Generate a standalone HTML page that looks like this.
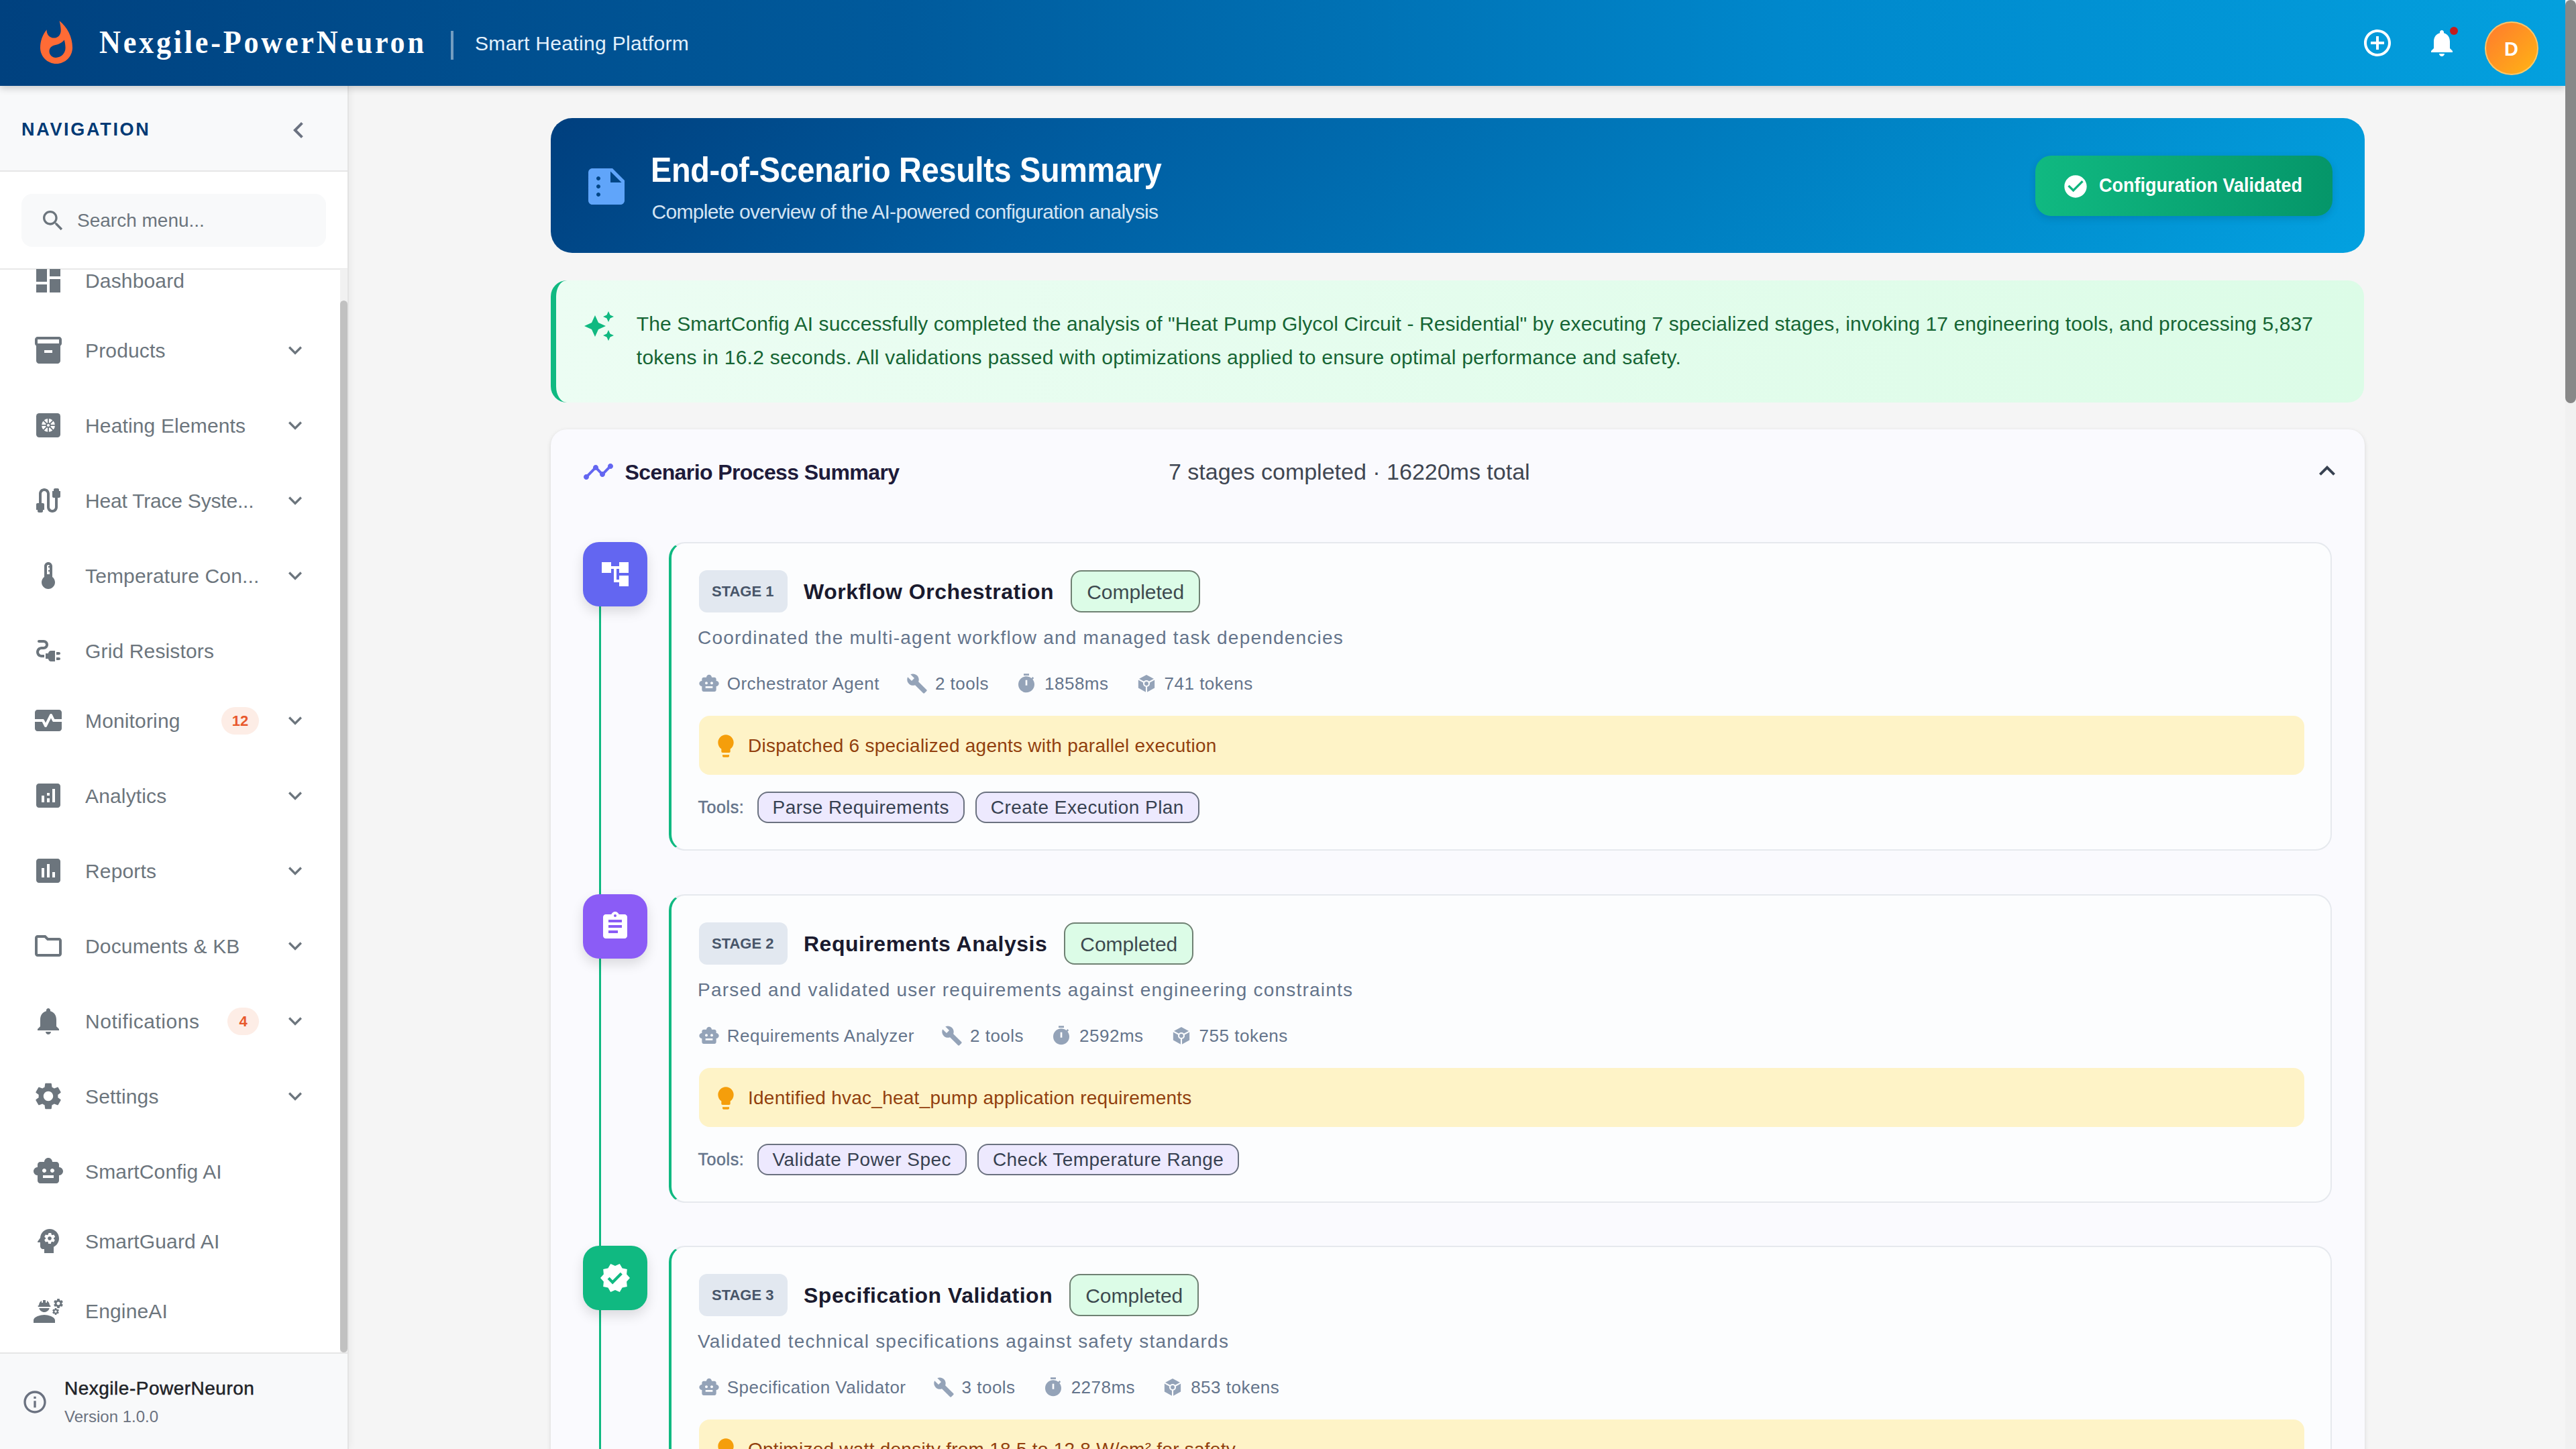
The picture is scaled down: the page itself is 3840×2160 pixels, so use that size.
<!DOCTYPE html>
<html><head><meta charset="utf-8">
<style>
*{box-sizing:border-box}
html,body{margin:0;padding:0}
body{width:3840px;height:2160px;overflow:hidden;position:relative;background:#f5f5f5;font-family:"Liberation Sans",sans-serif}
.a{position:absolute}
.t{position:absolute;line-height:1;white-space:nowrap}
svg{display:block}
/* header */
#hdr{left:0;top:0;width:3824px;height:128px;background:linear-gradient(90deg,#00417f 0%,#005a9c 35%,#0088cc 70%,#03a0de 100%);box-shadow:0 4px 10px rgba(0,0,0,0.18);z-index:5}
/* sidebar */
#side{left:0;top:128px;width:520px;height:2032px;background:#fff;border-right:2px solid #e3e3e3;z-index:2;overflow:hidden;box-shadow:2px 0 10px rgba(0,0,0,0.05)}
.ni{position:absolute;left:48px;width:48px;height:48px;fill:#6c757d}
.nt{position:absolute;left:127px;font-size:30px;line-height:1;letter-spacing:0.15px;color:#6c757d;white-space:nowrap}
.nc{position:absolute;left:420px;width:40px;height:40px;fill:#6c757d}
.nb{position:absolute;height:41px;border-radius:21px;background:#fdede6;color:#e8582b;font-weight:700;font-size:22px;line-height:41px;text-align:center}
.sic{left:48px;width:96px;height:96px;border-radius:24px;box-shadow:0 8px 18px rgba(0,0,0,0.13)}
.scard{left:176px;width:2479px;height:460px;border:2px solid #e6e9ee;border-left:4px solid #10b981;border-radius:24px;background:#fcfdfe}
.schip{width:132px;height:63px;border-radius:12px;background:#e2e8f0}
.comp{height:63px;border:2px solid #6f8173;border-radius:16px;background:#dcfce7;font-size:30px;line-height:59px;padding:1px 22px 0 22px;color:#3d4a4f;white-space:nowrap}
.meta{display:flex;height:32px;align-items:center}
.mg{display:flex;align-items:center;margin-right:40px}
.mg svg{fill:#94a3b8;margin-right:11px}
.mg span{font-size:26px;line-height:26px;letter-spacing:0.5px;color:#64748b;white-space:nowrap}
.ins{width:2393px;height:88px;border-radius:16px;background:#fef3c7}
.tools{display:flex;gap:16px}
.tc{height:47px;border:2px solid #6b7280;border-radius:16px;background:#ede9fe;font-size:28px;line-height:43px;padding:0 21px;letter-spacing:0.45px;color:#374151;white-space:nowrap}
/* scrollbar */
#sb{left:3824px;top:0;width:16px;height:2160px;background:#f1f1f1;z-index:6}
#sbt{left:0;top:0;width:16px;height:601px;background:#888;border-radius:8px}
</style></head>
<body>
<!-- HEADER -->
<div id="hdr" class="a">
  <svg class="a" style="left:48px;top:29px" width="72" height="72" viewBox="0 0 24 24"><path fill="#ff6b35" fill-rule="evenodd" d="M13.5.67s.74 2.65.74 4.8c0 2.06-1.35 3.73-3.41 3.73-2.07 0-3.63-1.67-3.63-3.73l.03-.36C5.21 7.51 4 10.62 4 14c0 4.42 3.58 8 8 8s8-3.58 8-8C20 8.61 17.41 3.8 13.5.67zM11.71 19c-1.78 0-3.22-1.4-3.22-3.14 0-1.62 1.05-2.76 2.81-3.12 1.77-.36 3.6-1.21 4.62-2.58.39 1.29.59 2.65.59 4.04 0 2.65-2.15 4.8-4.8 4.8z"/></svg>
  <div class="t" style="left:148px;top:39px;font-family:'Liberation Serif',serif;font-weight:700;font-size:48px;letter-spacing:4.1px;color:#fff;transform:scaleX(0.92);transform-origin:0 0">Nexgile-PowerNeuron</div>
  <div class="a" style="left:672px;top:46px;width:4px;height:43px;background:rgba(255,255,255,0.45)"></div>
  <div class="t" style="left:708px;top:50px;font-size:30px;letter-spacing:0.33px;color:#e3f1fc">Smart Heating Platform</div>
  <svg class="a" style="left:3520px;top:40px" width="48" height="48" viewBox="0 0 24 24"><path fill="#fff" d="M13 7h-2v4H7v2h4v4h2v-4h4v-2h-4V7zm-1-5C6.48 2 2 6.48 2 12s4.48 10 10 10 10-4.48 10-10S17.52 2 12 2zm0 18c-4.41 0-8-3.59-8-8s3.59-8 8-8 8 3.59 8 8-3.59 8-8 8z"/></svg>
  <svg class="a" style="left:3616px;top:40px" width="48" height="48" viewBox="0 0 24 24"><path fill="#fff" d="M12 22c1.1 0 2-.9 2-2h-4c0 1.1.89 2 2 2zm6-6v-5c0-3.07-1.64-5.64-4.5-6.32V4c0-.83-.67-1.5-1.5-1.5s-1.5.67-1.5 1.5v.68C7.63 5.36 6 7.92 6 11v5l-2 2v1h16v-1l-2-2z"/></svg>
  <div class="a" style="left:3652px;top:40px;width:12px;height:12px;border-radius:50%;background:#c41c1c"></div>
  <div class="a" style="left:3704px;top:32px;width:80px;height:80px;border-radius:50%;background:linear-gradient(135deg,#ff7a2e,#ffb414);border:2.5px solid rgba(255,214,130,0.75)"></div>
  <div class="t" style="left:3703.5px;top:58.5px;width:80px;text-align:center;font-size:29px;font-weight:700;color:#fff">D</div>
</div>

<!-- SIDEBAR -->
<div id="side" class="a">
  <div class="a" style="left:0;top:0;width:518px;height:128px;background:#f8f9fa;border-bottom:2px solid #e6e6e6"></div>
  <div class="t" style="left:32px;top:51.5px;font-size:27px;font-weight:700;letter-spacing:2.7px;color:#003a75">NAVIGATION</div>
  <svg class="a" style="left:421px;top:42px" width="48" height="48" viewBox="0 0 24 24"><path fill="#6b7280" d="M15.41 7.41 14 6l-6 6 6 6 1.41-1.41L10.83 12z"/></svg>
  <div class="a" style="left:0;top:271.5px;width:518px;height:2px;background:#e8e8e8"></div>
  <div class="a" style="left:32px;top:161px;width:454px;height:79px;border-radius:16px;background:#f8f9fa"></div>
  <svg class="a" style="left:59px;top:180.5px" width="40" height="40" viewBox="0 0 24 24"><path fill="#6c757d" d="M15.5 14h-.79l-.28-.27C15.41 12.59 16 11.11 16 9.5 16 5.91 13.09 3 9.5 3S3 5.91 3 9.5 5.91 16 9.5 16c1.61 0 3.09-.59 4.23-1.57l.27.28v.79l5 4.99L20.49 19l-4.99-5zm-6 0C7.01 14 5 11.99 5 9.5S7.01 5 9.5 5 14 7.01 14 9.5 11.99 14 9.5 14z"/></svg>
  <div class="t" style="left:115px;top:187.3px;font-size:28px;color:#6c757d">Search menu...</div>
  <div class="a" style="left:0;top:273px;width:518px;height:1615px;overflow:hidden">
    <div class="a" style="left:0;top:-273px;width:518px;height:2032px">
  <svg class="ni" style="top:266px" viewBox="0 0 24 24"><path d="M3 13h8V3H3v10zm0 8h8v-6H3v6zm10 0h8V11h-8v10zm0-18v6h8V3h-8z"/></svg>
  <div class="nt" style="top:276.1px">Dashboard</div>
  <svg class="ni" style="top:370px" viewBox="0 0 24 24"><path d="M20 2H4c-1 0-2 .9-2 2v3.01c0 .72.43 1.34 1 1.69V20c0 1.1 1.1 2 2 2h14c.9 0 2-.9 2-2V8.7c.57-.35 1-.97 1-1.69V4c0-1.1-1-2-2-2zm-5 12H9v-2h6v2zm5-7H4V4l16-.02V7z"/></svg>
  <div class="nt" style="top:380.1px">Products</div>
  <svg class="nc" style="top:374px" viewBox="0 0 24 24"><path d="M16.59 8.59 12 13.17 7.41 8.59 6 10l6 6 6-6z"/></svg>
  <svg class="ni" style="top:482px" viewBox="0 0 24 24"><rect x="3" y="3" width="18" height="18" rx="2.2"/><circle cx="12" cy="12" r="5" fill="#fff"/><g stroke="#6c757d" stroke-width="0.9"><line x1="12" y1="6.5" x2="12" y2="17.5"/><line x1="6.5" y1="12" x2="17.5" y2="12"/><line x1="8.1" y1="8.1" x2="15.9" y2="15.9"/><line x1="15.9" y1="8.1" x2="8.1" y2="15.9"/></g><circle cx="12" cy="12" r="1.9"/><circle cx="12" cy="12" r="1.05" fill="#fff"/></svg>
  <div class="nt" style="top:492.1px">Heating Elements</div>
  <svg class="nc" style="top:486px" viewBox="0 0 24 24"><path d="M16.59 8.59 12 13.17 7.41 8.59 6 10l6 6 6-6z"/></svg>
  <svg class="ni" style="top:594px" viewBox="0 0 24 24"><path d="M20 5V4c0-.55-.45-1-1-1h-2c-.55 0-1 .45-1 1v1h-1v4c0 .55.45 1 1 1h1v7c0 1.1-.9 2-2 2s-2-.9-2-2V7c0-2.21-1.79-4-4-4S5 4.79 5 7v7H4c-.55 0-1 .45-1 1v4h1v1c0 .55.45 1 1 1h2c.55 0 1-.45 1-1v-1h1v-4c0-.55-.45-1-1-1H7V7c0-1.1.9-2 2-2s2 .9 2 2v10c0 2.21 1.79 4 4 4s4-1.79 4-4v-7h1c.55 0 1-.45 1-1V5h-1z"/></svg>
  <div class="nt" style="top:604.1px;letter-spacing:-0.2px">Heat Trace Syste...</div>
  <svg class="nc" style="top:598px" viewBox="0 0 24 24"><path d="M16.59 8.59 12 13.17 7.41 8.59 6 10l6 6 6-6z"/></svg>
  <svg class="ni" style="top:706px" viewBox="0 0 24 24"><path d="M15 13V5c0-1.66-1.34-3-3-3S9 3.34 9 5v8c-1.21.91-2 2.37-2 4 0 2.76 2.24 5 5 5s5-2.24 5-5c0-1.63-.79-3.09-2-4zm-4-8c0-.55.45-1 1-1s1 .45 1 1h-1v1h1v2h-1v1h1v2h-2V5z"/></svg>
  <div class="nt" style="top:716.1px">Temperature Con...</div>
  <svg class="nc" style="top:710px" viewBox="0 0 24 24"><path d="M16.59 8.59 12 13.17 7.41 8.59 6 10l6 6 6-6z"/></svg>
  <svg class="ni" style="top:818px" viewBox="0 0 24 24"><path d="M21 14c0-.55-.45-1-1-1h-2v2h2c.55 0 1-.45 1-1zm-1 3h-2v2h2c.55 0 1-.45 1-1s-.45-1-1-1zm-8-3h-2v4h2c0 1.1.9 2 2 2h3v-8h-3c-1.1 0-2 .9-2 2zM5 13c0-1.1.9-2 2-2h1.5c1.93 0 3.5-1.57 3.5-3.5S10.43 4 8.5 4H5c-.55 0-1 .45-1 1s.45 1 1 1h3.5c.83 0 1.5.67 1.5 1.5S9.33 9 8.5 9H7c-2.21 0-4 1.79-4 4s1.79 4 4 4h2v-2H7c-1.1 0-2-.9-2-2z"/></svg>
  <div class="nt" style="top:828.1px">Grid Resistors</div>
  <svg class="ni" style="top:922px" viewBox="0 0 24 24"><path d="M15.11 12.45 14 10.24l-3.11 6.21c-.16.34-.51.55-.89.55s-.73-.21-.89-.55L7.38 13H2v5c0 1.1.9 2 2 2h16c1.1 0 2-.9 2-2v-5h-6c-.38 0-.73-.21-.89-.55zM20 4H4c-1.1 0-2 .9-2 2v5h6c.38 0 .73.21.89.55L10 13.76l3.11-6.21c.34-.69 1.45-.69 1.79 0L16.62 11H22V6c0-1.1-.9-2-2-2z"/></svg>
  <div class="nt" style="top:932.1px">Monitoring</div>
  <div class="nb" style="left:330px;top:925.5px;width:56px">12</div>
  <svg class="nc" style="top:926px" viewBox="0 0 24 24"><path d="M16.59 8.59 12 13.17 7.41 8.59 6 10l6 6 6-6z"/></svg>
  <svg class="ni" style="top:1034px" viewBox="0 0 24 24"><path d="M19 3H5c-1.1 0-2 .9-2 2v14c0 1.1.9 2 2 2h14c1.1 0 2-.9 2-2V5c0-1.1-.9-2-2-2zM9 17H7v-5h2v5zm4 0h-2v-3h2v3zm0-5h-2v-2h2v2zm4 5h-2V7h2v10z"/></svg>
  <div class="nt" style="top:1044.1px">Analytics</div>
  <svg class="nc" style="top:1038px" viewBox="0 0 24 24"><path d="M16.59 8.59 12 13.17 7.41 8.59 6 10l6 6 6-6z"/></svg>
  <svg class="ni" style="top:1146px" viewBox="0 0 24 24"><path d="M19 3H5c-1.1 0-2 .9-2 2v14c0 1.1.9 2 2 2h14c1.1 0 2-.9 2-2V5c0-1.1-.9-2-2-2zM9 17H7v-7h2v7zm4 0h-2V7h2v10zm4 0h-2v-4h2v4z"/></svg>
  <div class="nt" style="top:1156.1px">Reports</div>
  <svg class="nc" style="top:1150px" viewBox="0 0 24 24"><path d="M16.59 8.59 12 13.17 7.41 8.59 6 10l6 6 6-6z"/></svg>
  <svg class="ni" style="top:1258px" viewBox="0 0 24 24"><path d="M9.17 6l2 2H20v10H4V6h5.17M10 4H4c-1.1 0-1.99.9-1.99 2L2 18c0 1.1.9 2 2 2h16c1.1 0 2-.9 2-2V8c0-1.1-.9-2-2-2h-8l-2-2z"/></svg>
  <div class="nt" style="top:1268.1px">Documents &amp; KB</div>
  <svg class="nc" style="top:1262px" viewBox="0 0 24 24"><path d="M16.59 8.59 12 13.17 7.41 8.59 6 10l6 6 6-6z"/></svg>
  <svg class="ni" style="top:1370px" viewBox="0 0 24 24"><path d="M12 22c1.1 0 2-.9 2-2h-4c0 1.1.89 2 2 2zm6-6v-5c0-3.07-1.64-5.64-4.5-6.32V4c0-.83-.67-1.5-1.5-1.5s-1.5.67-1.5 1.5v.68C7.63 5.36 6 7.92 6 11v5l-2 2v1h16v-1l-2-2z"/></svg>
  <div class="nt" style="top:1380.1px;letter-spacing:0.55px">Notifications</div>
  <div class="nb" style="left:339px;top:1373.5px;width:47px">4</div>
  <svg class="nc" style="top:1374px" viewBox="0 0 24 24"><path d="M16.59 8.59 12 13.17 7.41 8.59 6 10l6 6 6-6z"/></svg>
  <svg class="ni" style="top:1482px" viewBox="0 0 24 24"><path d="M19.14 12.94c.04-.3.06-.61.06-.94 0-.32-.02-.64-.07-.94l2.03-1.58c.18-.14.23-.41.12-.61l-1.92-3.32c-.12-.22-.37-.29-.59-.22l-2.39.96c-.5-.38-1.03-.7-1.62-.94l-.36-2.54c-.04-.24-.24-.41-.48-.41h-3.84c-.24 0-.43.17-.47.41l-.36 2.54c-.59.24-1.13.57-1.62.94l-2.39-.96c-.22-.08-.47 0-.59.22L2.74 8.87c-.12.21-.08.47.12.61l2.03 1.58c-.05.3-.09.63-.09.94s.02.64.07.94l-2.03 1.58c-.18.14-.23.41-.12.61l1.92 3.32c.12.22.37.29.59.22l2.39-.96c.5.38 1.03.7 1.62.94l.36 2.54c.05.24.24.41.48.41h3.84c.24 0 .44-.17.47-.41l.36-2.54c.59-.24 1.13-.56 1.62-.94l2.39.96c.22.08.47 0 .59-.22l1.92-3.32c.12-.22.07-.47-.12-.61l-2.01-1.58zM12 15.6c-1.98 0-3.6-1.62-3.6-3.6s1.62-3.6 3.6-3.6 3.6 1.62 3.6 3.6-1.62 3.6-3.6 3.6z"/></svg>
  <div class="nt" style="top:1492.1px">Settings</div>
  <svg class="nc" style="top:1486px" viewBox="0 0 24 24"><path d="M16.59 8.59 12 13.17 7.41 8.59 6 10l6 6 6-6z"/></svg>
  <svg class="ni" style="top:1594px" viewBox="0 0 24 24"><path d="M20 9V7c0-1.1-.9-2-2-2h-3c0-1.66-1.34-3-3-3S9 3.34 9 5H6c-1.1 0-2 .9-2 2v2c-1.66 0-3 1.34-3 3s1.34 3 3 3v4c0 1.1.9 2 2 2h12c1.1 0 2-.9 2-2v-4c1.66 0 3-1.34 3-3s-1.34-3-3-3zM7.5 11.5c0-.83.67-1.5 1.5-1.5s1.5.67 1.5 1.5S9.83 13 9 13s-1.5-.67-1.5-1.5zM16 17H8v-2h8v2zm-1-4c-.83 0-1.5-.67-1.5-1.5S14.17 10 15 10s1.5.67 1.5 1.5S15.83 13 15 13z"/></svg>
  <div class="nt" style="top:1604.1px">SmartConfig AI</div>
  <svg class="ni" style="top:1698px" viewBox="0 0 24 24"><path d="M13 8.57c-.79 0-1.43.64-1.43 1.43s.64 1.43 1.43 1.43 1.43-.64 1.43-1.43-.64-1.43-1.43-1.43zM13 3C9.25 3 6.2 5.94 6.02 9.64L4.1 12.2c-.25.33-.01.8.4.8H6v3c0 1.1.9 2 2 2h1v3h7v-4.68c2.36-1.12 4-3.53 4-6.32 0-3.87-3.13-7-7-7zm3 7c0 .13-.01.26-.02.39l.83.66c.08.06.1.16.05.25l-.8 1.39c-.05.09-.16.12-.24.09l-.99-.4c-.21.16-.43.29-.67.39L14 13.83c-.01.1-.1.17-.2.17h-1.6c-.1 0-.18-.07-.2-.17l-.15-1.06c-.25-.1-.47-.23-.68-.39l-.99.4c-.09.03-.2 0-.25-.09l-.8-1.39c-.05-.08-.03-.19.05-.25l.84-.66c-.01-.13-.02-.26-.02-.39s.02-.27.04-.39l-.85-.66c-.08-.06-.1-.16-.05-.26l.8-1.38c.05-.09.15-.12.24-.09l1 .4c.2-.15.43-.29.67-.39L12.2 6.2c.02-.1.1-.17.2-.17h1.6c.1 0 .18.07.19.17l.15 1.06c.24.1.46.23.67.39l1-.4c.09-.03.2 0 .24.09l.8 1.38c.05.09.03.2-.05.26l-.85.66c.03.12.04.25.04.39z"/></svg>
  <div class="nt" style="top:1708.1px">SmartGuard AI</div>
  <svg class="ni" style="top:1802px" viewBox="0 0 24 24"><path d="M9 15c-2.67 0-8 1.34-8 4v2h16v-2c0-2.66-5.33-4-8-4zM22.1 6.84c.01-.11.02-.22.02-.34 0-.12-.01-.23-.03-.34l.74-.58c.07-.05.08-.15.04-.22l-.7-1.21c-.04-.08-.14-.1-.21-.08l-.86.35c-.18-.14-.38-.25-.59-.34l-.13-.93c-.02-.09-.09-.15-.18-.15h-1.4c-.09 0-.16.06-.17.15l-.13.93c-.21.09-.41.21-.59.34l-.87-.35c-.08-.03-.17 0-.21.08l-.7 1.21c-.04.08-.03.17.04.22l.74.58c-.02.11-.03.23-.03.34 0 .11.01.23.03.34l-.74.58c-.07.05-.08.15-.04.22l.7 1.21c.04.08.14.1.21.08l.87-.35c.18.14.38.25.59.34l.13.93c.01.09.08.15.17.15h1.4c.09 0 .16-.06.17-.15l.13-.93c.21-.09.41-.21.59-.34l.87.35c.08.03.17 0 .21-.08l.7-1.21c.04-.08.03-.17-.04-.22l-.73-.58zm-2.6.91c-.69 0-1.25-.56-1.25-1.25s.56-1.25 1.25-1.25 1.25.56 1.25 1.25-.56 1.25-1.25 1.25zm.42 3.93-.5-.87c-.03-.06-.1-.08-.15-.06l-.62.25c-.13-.1-.27-.18-.42-.24l-.09-.66c-.02-.06-.08-.1-.14-.1h-1c-.06 0-.11.04-.12.11l-.09.66c-.15.06-.29.15-.42.24l-.62-.25c-.06-.02-.12 0-.15.06l-.5.87c-.03.06-.02.12.03.16l.53.41c-.01.08-.02.16-.02.24 0 .08.01.17.02.24l-.53.41c-.05.04-.06.11-.03.16l.5.87c.03.06.1.08.15.06l.62-.25c.13.1.27.18.42.24l.09.66c.01.07.06.11.12.11h1c.06 0 .12-.04.12-.11l.09-.66c.15-.06.29-.15.42-.24l.62.25c.06.02.12 0 .15-.06l.5-.87c.03-.06.02-.12-.03-.16l-.52-.41c.01-.08.02-.16.02-.24 0-.08-.01-.17-.02-.24l.53-.41c.05-.04.06-.11.04-.17zm-2.42 1.65c-.46 0-.83-.38-.83-.83 0-.46.38-.83.83-.83s.83.38.83.83c0 .46-.37.83-.83.83zM4.74 9h8.53c.27 0 .49-.22.49-.49v-.02c0-.27-.22-.49-.49-.49H13c0-1.48-.81-2.75-2-3.45v.95c0 .28-.22.5-.5.5s-.5-.22-.5-.5V4.14C9.68 4.06 9.35 4 9 4s-.68.06-1 .14V5.5c0 .28-.22.5-.5.5S7 5.78 7 5.5v-.95C5.81 5.25 5 6.52 5 8h-.26c-.27 0-.49.22-.49.49v.03c0 .26.22.48.49.48zM9 13c1.86 0 3.41-1.28 3.86-3H5.14c.45 1.72 2 3 3.86 3z"/></svg>
  <div class="nt" style="top:1812.1px">EngineAI</div>
    </div>
    <div class="a" style="left:507px;top:0;width:11px;height:1615px;background:#f1f1f1"></div>
    <div class="a" style="left:507px;top:47px;width:11px;height:1568px;border-radius:6px;background:#c1c1c1"></div>
  </div>
  <div class="a" style="left:0;top:1888px;width:518px;height:144px;background:#f8f9fa;border-top:2px solid #e6e6e6"></div>
  <svg class="a" style="left:31.7px;top:1941.7px" width="40" height="40" viewBox="0 0 24 24"><path fill="#6b7280" d="M11 7h2v2h-2zm0 4h2v6h-2zm1-9C6.48 2 2 6.48 2 12s4.48 10 10 10 10-4.48 10-10S17.52 2 12 2zm0 18c-4.41 0-8-3.59-8-8s3.59-8 8-8 8 3.59 8 8-3.59 8-8 8z"/></svg>
  <div class="t" style="left:96px;top:1928.3px;font-size:28px;letter-spacing:0.5px;color:#1f2328;-webkit-text-stroke:0.5px #1f2328">Nexgile-PowerNeuron</div>
  <div class="t" style="left:96px;top:1972.3px;font-size:24px;color:#6b7280">Version 1.0.0</div>
</div>

<!-- MAIN -->
<!-- RESULTS HEADER CARD -->
<div class="a" style="left:821px;top:176px;width:2704px;height:201px;border-radius:32px;background:linear-gradient(135deg,#003f7e 0%,#005ea2 30%,#0080c2 65%,#03a1e0 100%);overflow:hidden">
  <svg class="a" style="left:46.5px;top:65.5px" width="72" height="72" viewBox="0 0 24 24"><path fill="#60a5fa" d="M15 3H5c-1.1 0-1.99.9-1.99 2L3 19c0 1.1.89 2 1.99 2H19c1.1 0 2-.9 2-2V9l-6-6zM8 17c-.55 0-1-.45-1-1s.45-1 1-1 1 .45 1 1-.45 1-1 1zm0-4c-.55 0-1-.45-1-1s.45-1 1-1 1 .45 1 1-.45 1-1 1zm0-4c-.55 0-1-.45-1-1s.45-1 1-1 1 .45 1 1-.45 1-1 1zm6 1V4.5l5.5 5.5H14z"/></svg>
  <div class="t" style="left:149px;top:51px;font-size:52px;font-weight:700;letter-spacing:-0.3px;color:#fff;transform:scaleX(0.9);transform-origin:0 0">End-of-Scenario Results Summary</div>
  <div class="t" style="left:150.5px;top:124.6px;font-size:30px;letter-spacing:-0.7px;color:#d4e4f3">Complete overview of the AI-powered configuration analysis</div>
  <div class="a" style="left:2212.7px;top:56px;width:443px;height:90px;border-radius:24px;background:linear-gradient(90deg,#10b981,#059669);box-shadow:0 4px 12px rgba(0,0,0,0.12)">
    <svg class="a" style="left:40px;top:25.7px" width="40" height="40" viewBox="0 0 24 24"><path fill="#fff" d="M12 2C6.48 2 2 6.48 2 12s4.48 10 10 10 10-4.48 10-10S17.52 2 12 2zm-2 15-5-5 1.41-1.41L10 14.17l7.59-7.59L19 8l-9 9z"/></svg>
    <div class="t" style="left:95.8px;top:29px;font-size:30px;font-weight:700;letter-spacing:0px;color:#fff;transform:scaleX(0.9);transform-origin:0 0">Configuration Validated</div>
  </div>
</div>

<!-- ALERT -->
<div class="a" style="left:821px;top:418px;width:2703px;height:182px;border-radius:24px;background:linear-gradient(90deg,#ecfdf3,#dcfce7);border-left:8px solid #10b981">
  <svg class="a" style="left:39.6px;top:44px" width="48" height="48" viewBox="0 0 24 24"><path fill="#10b981" d="M19 9l1.25-2.75L23 5l-2.75-1.25L19 1l-1.25 2.75L15 5l2.75 1.25L19 9zm-7.5.5L9 4 6.5 9.5 1 12l5.5 2.5L9 20l2.5-5.5L17 12l-5.5-2.5zM19 15l-1.25 2.75L15 19l2.75 1.25L19 23l1.25-2.75L23 19l-2.75-1.25L19 15z"/></svg>
  <div class="t" style="left:119.8px;top:49.6px;font-size:30px;letter-spacing:0.09px;color:#166534">The SmartConfig AI successfully completed the analysis of "Heat Pump Glycol Circuit - Residential" by executing 7 specialized stages, invoking 17 engineering tools, and processing 5,837</div>
  <div class="t" style="left:119.8px;top:100.2px;font-size:30px;letter-spacing:0.25px;color:#166534">tokens in 16.2 seconds. All validations passed with optimizations applied to ensure optimal performance and safety.</div>
</div>

<!-- PROCESS CARD -->
<div class="a" style="left:821px;top:640px;width:2704px;height:1600px;border-radius:24px;background:#fafafe;box-shadow:0 2px 6px rgba(0,0,0,0.13)">
  <svg class="a" style="left:47px;top:39px" width="48" height="48" viewBox="0 0 24 24"><path fill="#6366f1" d="M23 8c0 1.1-.9 2-2 2-.18 0-.35-.02-.51-.07l-3.56 3.55c.05.16.07.34.07.52 0 1.1-.9 2-2 2s-2-.9-2-2c0-.18.02-.36.07-.52l-2.55-2.55c-.16.05-.34.07-.52.07s-.36-.02-.52-.07l-4.55 4.56c.05.16.07.33.07.51 0 1.1-.9 2-2 2s-2-.9-2-2 .9-2 2-2c.18 0 .35.02.51.07l4.56-4.55C8.02 9.36 8 9.18 8 9c0-1.1.9-2 2-2s2 .9 2 2c0 .18-.02.36-.07.52l2.55 2.55c.16-.05.34-.07.52-.07s.36.02.52.07l3.55-3.56C19.02 8.35 19 8.18 19 8c0-1.1.9-2 2-2s2 .9 2 2z"/></svg>
  <div class="t" style="left:110.5px;top:47.6px;font-size:32px;font-weight:700;letter-spacing:-0.6px;color:#1e1b3a">Scenario Process Summary</div>
  <div class="t" style="left:921px;top:45.7px;font-size:34px;color:#3f4652">7 stages completed · 16220ms total</div>
  <svg class="a" style="left:2624px;top:37.5px" width="48" height="48" viewBox="0 0 24 24"><path fill="#374151" d="m12 8-6 6 1.41 1.41L12 10.83l4.59 4.58L18 14z"/></svg>
  <div class="a" style="left:72px;top:264px;width:3px;height:1400px;background:#10b981"></div>
  <div class="a sic" style="top:168px;background:#6366f1"><svg class="a" style="left:24px;top:24px" width="48" height="48" viewBox="0 0 24 24"><path fill="#fff" d="M22 11V3h-7v3H9V3H2v8h7V8h2v10h4v3h7v-8h-7v3h-2V8h2v3z"/></svg></div>
  <div class="a scard" style="top:168px">
    <div class="a schip" style="left:41px;top:40px"><div class="t" style="left:19px;top:21.4px;font-size:22px;font-weight:700;letter-spacing:0px;color:#475569">STAGE 1</div></div>
    <div class="a" style="left:197px;top:40px;height:63px;display:flex;align-items:center;gap:25px"><div style="font-size:32px;line-height:32px;font-weight:700;letter-spacing:0.5px;color:#1a1a2e;white-space:nowrap">Workflow Orchestration</div><div class="comp">Completed</div></div>
    <div class="t" style="left:39px;top:126.8px;font-size:28px;letter-spacing:1.22px;color:#64748b">Coordinated the multi-agent workflow and managed task dependencies</div>
    <div class="a meta" style="left:39.7px;top:192.5px"><div class="mg"><svg width="32" height="32" viewBox="0 0 24 24"><path d="M20 9V7c0-1.1-.9-2-2-2h-3c0-1.66-1.34-3-3-3S9 3.34 9 5H6c-1.1 0-2 .9-2 2v2c-1.66 0-3 1.34-3 3s1.34 3 3 3v4c0 1.1.9 2 2 2h12c1.1 0 2-.9 2-2v-4c1.66 0 3-1.34 3-3s-1.34-3-3-3zM7.5 11.5c0-.83.67-1.5 1.5-1.5s1.5.67 1.5 1.5S9.83 13 9 13s-1.5-.67-1.5-1.5zM16 17H8v-2h8v2zm-1-4c-.83 0-1.5-.67-1.5-1.5S14.17 10 15 10s1.5.67 1.5 1.5S15.83 13 15 13z"/></svg><span>Orchestrator Agent</span></div><div class="mg"><svg width="32" height="32" viewBox="0 0 24 24"><path d="M22.7 19l-9.1-9.1c.9-2.3.4-5-1.5-6.9-2-2-5-2.4-7.4-1.3L9 6 6 9 1.6 4.7C.4 7.1.9 10.1 2.9 12.1c1.9 1.9 4.6 2.4 6.9 1.5l9.1 9.1c.4.4 1 .4 1.4 0l2.3-2.3c.5-.4.5-1.1.1-1.4z"/></svg><span>2 tools</span></div><div class="mg"><svg width="32" height="32" viewBox="0 0 24 24"><path d="M9 1h6v2H9zm10.03 6.39l1.42-1.42c-.43-.51-.9-.99-1.41-1.41l-1.42 1.42C16.07 4.74 14.12 4 12 4c-4.97 0-9 4.03-9 9s4.02 9 9 9 9-4.03 9-9c0-2.12-.74-4.07-1.97-5.61zM13 14h-2V8h2v6z"/></svg><span>1858ms</span></div><div class="mg"><svg width="32" height="32" viewBox="0 0 24 24"><polygon points="12,2.2 21.1,7.1 21.1,16.9 12,21.9 2.9,16.9 2.9,7.1"/><g stroke="#fcfdfe" stroke-width="1.6"><line x1="12" y1="12" x2="1.5" y2="6.3"/><line x1="12" y1="12" x2="22.5" y2="6.3"/><line x1="12" y1="12" x2="12" y2="23"/></g><circle cx="12" cy="12" r="3.8" fill="#fcfdfe"/><circle cx="12" cy="12" r="2.2"/></svg><span>741 tokens</span></div></div>
    <div class="a ins" style="left:41px;top:257px"><svg class="a" style="left:19.6px;top:25.4px" width="40" height="40" viewBox="0 0 24 24"><path fill="#f59e0b" d="M9 21c0 .55.45 1 1 1h4c.55 0 1-.45 1-1v-1H9v1zm3-19C8.14 2 5 5.14 5 9c0 2.38 1.19 4.47 3 5.74V17c0 .55.45 1 1 1h6c.55 0 1-.45 1-1v-2.26c1.81-1.27 3-3.36 3-5.74 0-3.86-3.14-7-7-7z"/></svg><div class="t" style="left:73px;top:31.3px;font-size:28px;letter-spacing:0.25px;color:#92400e">Dispatched 6 specialized agents with parallel execution</div></div>
    <div class="t" style="left:39.5px;top:380.7px;font-size:25px;letter-spacing:0.6px;color:#64748b;-webkit-text-stroke:0.5px #64748b">Tools:</div>
    <div class="a tools" style="left:127.5px;top:370px"><div class="tc">Parse Requirements</div><div class="tc">Create Execution Plan</div></div>
  </div>
  <div class="a sic" style="top:693px;background:#8b5cf6"><svg class="a" style="left:24px;top:24px" width="48" height="48" viewBox="0 0 24 24"><path fill="#fff" d="M19 3h-4.18C14.4 1.84 13.3 1 12 1c-1.3 0-2.4.84-2.82 2H5c-1.1 0-2 .9-2 2v14c0 1.1.9 2 2 2h14c1.1 0 2-.9 2-2V5c0-1.1-.9-2-2-2zm-7 0c.55 0 1 .45 1 1s-.45 1-1 1-1-.45-1-1 .45-1 1-1zm2 14H7v-2h7v2zm3-4H7v-2h10v2zm0-4H7V7h10v2z"/></svg></div>
  <div class="a scard" style="top:693px">
    <div class="a schip" style="left:41px;top:40px"><div class="t" style="left:19px;top:21.4px;font-size:22px;font-weight:700;letter-spacing:0px;color:#475569">STAGE 2</div></div>
    <div class="a" style="left:197px;top:40px;height:63px;display:flex;align-items:center;gap:25px"><div style="font-size:32px;line-height:32px;font-weight:700;letter-spacing:0.5px;color:#1a1a2e;white-space:nowrap">Requirements Analysis</div><div class="comp">Completed</div></div>
    <div class="t" style="left:39px;top:126.8px;font-size:28px;letter-spacing:1.22px;color:#64748b">Parsed and validated user requirements against engineering constraints</div>
    <div class="a meta" style="left:39.7px;top:192.5px"><div class="mg"><svg width="32" height="32" viewBox="0 0 24 24"><path d="M20 9V7c0-1.1-.9-2-2-2h-3c0-1.66-1.34-3-3-3S9 3.34 9 5H6c-1.1 0-2 .9-2 2v2c-1.66 0-3 1.34-3 3s1.34 3 3 3v4c0 1.1.9 2 2 2h12c1.1 0 2-.9 2-2v-4c1.66 0 3-1.34 3-3s-1.34-3-3-3zM7.5 11.5c0-.83.67-1.5 1.5-1.5s1.5.67 1.5 1.5S9.83 13 9 13s-1.5-.67-1.5-1.5zM16 17H8v-2h8v2zm-1-4c-.83 0-1.5-.67-1.5-1.5S14.17 10 15 10s1.5.67 1.5 1.5S15.83 13 15 13z"/></svg><span>Requirements Analyzer</span></div><div class="mg"><svg width="32" height="32" viewBox="0 0 24 24"><path d="M22.7 19l-9.1-9.1c.9-2.3.4-5-1.5-6.9-2-2-5-2.4-7.4-1.3L9 6 6 9 1.6 4.7C.4 7.1.9 10.1 2.9 12.1c1.9 1.9 4.6 2.4 6.9 1.5l9.1 9.1c.4.4 1 .4 1.4 0l2.3-2.3c.5-.4.5-1.1.1-1.4z"/></svg><span>2 tools</span></div><div class="mg"><svg width="32" height="32" viewBox="0 0 24 24"><path d="M9 1h6v2H9zm10.03 6.39l1.42-1.42c-.43-.51-.9-.99-1.41-1.41l-1.42 1.42C16.07 4.74 14.12 4 12 4c-4.97 0-9 4.03-9 9s4.02 9 9 9 9-4.03 9-9c0-2.12-.74-4.07-1.97-5.61zM13 14h-2V8h2v6z"/></svg><span>2592ms</span></div><div class="mg"><svg width="32" height="32" viewBox="0 0 24 24"><polygon points="12,2.2 21.1,7.1 21.1,16.9 12,21.9 2.9,16.9 2.9,7.1"/><g stroke="#fcfdfe" stroke-width="1.6"><line x1="12" y1="12" x2="1.5" y2="6.3"/><line x1="12" y1="12" x2="22.5" y2="6.3"/><line x1="12" y1="12" x2="12" y2="23"/></g><circle cx="12" cy="12" r="3.8" fill="#fcfdfe"/><circle cx="12" cy="12" r="2.2"/></svg><span>755 tokens</span></div></div>
    <div class="a ins" style="left:41px;top:257px"><svg class="a" style="left:19.6px;top:25.4px" width="40" height="40" viewBox="0 0 24 24"><path fill="#f59e0b" d="M9 21c0 .55.45 1 1 1h4c.55 0 1-.45 1-1v-1H9v1zm3-19C8.14 2 5 5.14 5 9c0 2.38 1.19 4.47 3 5.74V17c0 .55.45 1 1 1h6c.55 0 1-.45 1-1v-2.26c1.81-1.27 3-3.36 3-5.74 0-3.86-3.14-7-7-7z"/></svg><div class="t" style="left:73px;top:31.3px;font-size:28px;letter-spacing:0.25px;color:#92400e">Identified hvac_heat_pump application requirements</div></div>
    <div class="t" style="left:39.5px;top:380.7px;font-size:25px;letter-spacing:0.6px;color:#64748b;-webkit-text-stroke:0.5px #64748b">Tools:</div>
    <div class="a tools" style="left:127.5px;top:370px"><div class="tc">Validate Power Spec</div><div class="tc">Check Temperature Range</div></div>
  </div>
  <div class="a sic" style="top:1217px;background:#10b981"><svg class="a" style="left:24px;top:24px" width="48" height="48" viewBox="0 0 24 24"><path fill="#fff" d="M23 12l-2.44-2.79.34-3.69-3.61-.82-1.89-3.2L12 2.96 8.6 1.5 6.71 4.69 3.1 5.5l.34 3.7L1 12l2.44 2.79-.34 3.7 3.61.82L8.6 22.5l3.4-1.47 3.4 1.46 1.89-3.19 3.61-.82-.34-3.69L23 12zm-12.91 4.72l-3.8-3.81 1.48-1.48 2.32 2.33 5.85-5.87 1.48 1.48-7.33 7.35z"/></svg></div>
  <div class="a scard" style="top:1217px">
    <div class="a schip" style="left:41px;top:40px"><div class="t" style="left:19px;top:21.4px;font-size:22px;font-weight:700;letter-spacing:0px;color:#475569">STAGE 3</div></div>
    <div class="a" style="left:197px;top:40px;height:63px;display:flex;align-items:center;gap:25px"><div style="font-size:32px;line-height:32px;font-weight:700;letter-spacing:0.5px;color:#1a1a2e;white-space:nowrap">Specification Validation</div><div class="comp">Completed</div></div>
    <div class="t" style="left:39px;top:126.8px;font-size:28px;letter-spacing:1.22px;color:#64748b">Validated technical specifications against safety standards</div>
    <div class="a meta" style="left:39.7px;top:192.5px"><div class="mg"><svg width="32" height="32" viewBox="0 0 24 24"><path d="M20 9V7c0-1.1-.9-2-2-2h-3c0-1.66-1.34-3-3-3S9 3.34 9 5H6c-1.1 0-2 .9-2 2v2c-1.66 0-3 1.34-3 3s1.34 3 3 3v4c0 1.1.9 2 2 2h12c1.1 0 2-.9 2-2v-4c1.66 0 3-1.34 3-3s-1.34-3-3-3zM7.5 11.5c0-.83.67-1.5 1.5-1.5s1.5.67 1.5 1.5S9.83 13 9 13s-1.5-.67-1.5-1.5zM16 17H8v-2h8v2zm-1-4c-.83 0-1.5-.67-1.5-1.5S14.17 10 15 10s1.5.67 1.5 1.5S15.83 13 15 13z"/></svg><span>Specification Validator</span></div><div class="mg"><svg width="32" height="32" viewBox="0 0 24 24"><path d="M22.7 19l-9.1-9.1c.9-2.3.4-5-1.5-6.9-2-2-5-2.4-7.4-1.3L9 6 6 9 1.6 4.7C.4 7.1.9 10.1 2.9 12.1c1.9 1.9 4.6 2.4 6.9 1.5l9.1 9.1c.4.4 1 .4 1.4 0l2.3-2.3c.5-.4.5-1.1.1-1.4z"/></svg><span>3 tools</span></div><div class="mg"><svg width="32" height="32" viewBox="0 0 24 24"><path d="M9 1h6v2H9zm10.03 6.39l1.42-1.42c-.43-.51-.9-.99-1.41-1.41l-1.42 1.42C16.07 4.74 14.12 4 12 4c-4.97 0-9 4.03-9 9s4.02 9 9 9 9-4.03 9-9c0-2.12-.74-4.07-1.97-5.61zM13 14h-2V8h2v6z"/></svg><span>2278ms</span></div><div class="mg"><svg width="32" height="32" viewBox="0 0 24 24"><polygon points="12,2.2 21.1,7.1 21.1,16.9 12,21.9 2.9,16.9 2.9,7.1"/><g stroke="#fcfdfe" stroke-width="1.6"><line x1="12" y1="12" x2="1.5" y2="6.3"/><line x1="12" y1="12" x2="22.5" y2="6.3"/><line x1="12" y1="12" x2="12" y2="23"/></g><circle cx="12" cy="12" r="3.8" fill="#fcfdfe"/><circle cx="12" cy="12" r="2.2"/></svg><span>853 tokens</span></div></div>
    <div class="a ins" style="left:41px;top:257px"><svg class="a" style="left:19.6px;top:25.4px" width="40" height="40" viewBox="0 0 24 24"><path fill="#f59e0b" d="M9 21c0 .55.45 1 1 1h4c.55 0 1-.45 1-1v-1H9v1zm3-19C8.14 2 5 5.14 5 9c0 2.38 1.19 4.47 3 5.74V17c0 .55.45 1 1 1h6c.55 0 1-.45 1-1v-2.26c1.81-1.27 3-3.36 3-5.74 0-3.86-3.14-7-7-7z"/></svg><div class="t" style="left:73px;top:31.3px;font-size:28px;letter-spacing:0.25px;color:#92400e">Optimized watt density from 18.5 to 12.8 W/cm² for safety</div></div>
    <div class="t" style="left:39.5px;top:380.7px;font-size:25px;letter-spacing:0.6px;color:#64748b;-webkit-text-stroke:0.5px #64748b">Tools:</div>
    <div class="a tools" style="left:127.5px;top:370px"><div class="tc">Calculate Watt Density</div><div class="tc">Check Safety Standards</div></div>
  </div>
</div>


<!-- PAGE SCROLLBAR -->
<div id="sb" class="a"><div id="sbt" class="a"></div></div>
</body></html>
